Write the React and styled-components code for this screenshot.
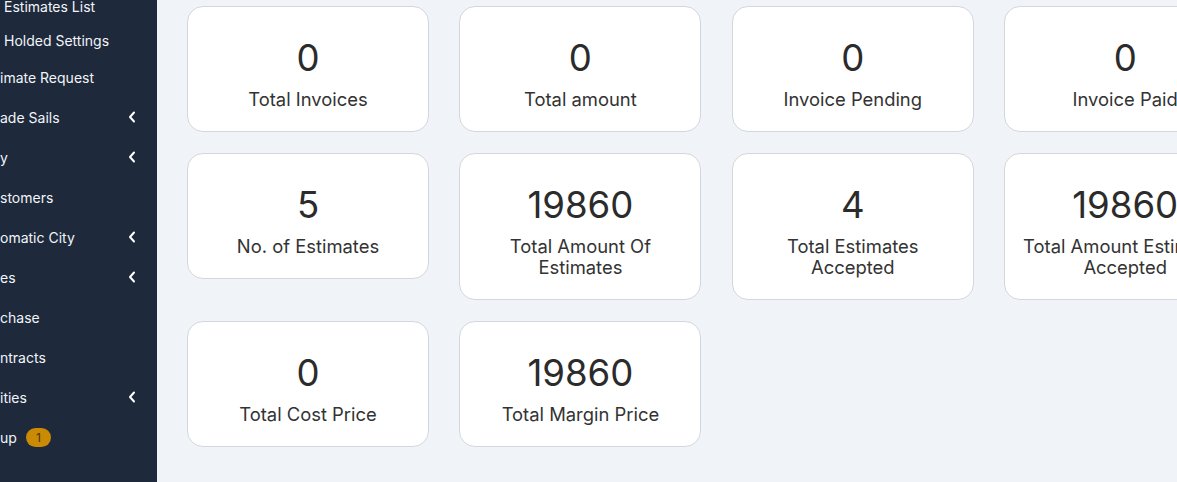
import React from 'react';
import styled, { createGlobalStyle } from 'styled-components';

const GlobalStyle = createGlobalStyle`
  html, body {
    margin: 0;
    padding: 0;
    height: 100%;
    overflow: hidden;
    background: #f0f3f8;
    font-family: Inter, "Noto Sans", sans-serif;
  }
  #root {
    height: 100%;
  }
`;

const Layout = styled.div`
  display: flex;
  height: 100vh;
  overflow: hidden;
`;

const Sidebar = styled.aside`
  flex: 0 0 157px;
  width: 157px;
  background: #1e293b;
  overflow: hidden;
`;

const NavList = styled.ul`
  list-style: none;
  margin: -11px 0 0;
  padding: 0;
`;

const NavItem = styled.li`
  display: flex;
  align-items: center;
  height: ${p => (p.$sub ? '34px' : '40px')};
  padding-left: ${p => (p.$sub ? '4px' : '0')};
  padding-right: 21px;
  color: #f1f5f9;
  font-size: 14px;
  white-space: nowrap;
`;

const Label = styled.span`
  flex: 1;
  display: flex;
  align-items: center;
  gap: 9px;
`;

const Badge = styled.span`
  display: inline-flex;
  align-items: center;
  justify-content: center;
  width: 25px;
  height: 19px;
  border-radius: 10px;
  background: #ca8a04;
  color: #4a3304;
  font-size: 12px;
`;

const Chevron = () => (
  <svg width="8" height="12" viewBox="0 0 8 12" fill="none">
    <polyline points="6,1.5 2,6 6,10.5" stroke="#ffffff" strokeWidth="2" strokeLinecap="round" strokeLinejoin="round" />
  </svg>
);

const Main = styled.main`
  flex: 1;
  padding: 6px 0 0 30px;
  overflow: hidden;
`;

const Grid = styled.div`
  display: grid;
  grid-template-columns: repeat(4, 242px);
  column-gap: 30.4px;
  row-gap: 21px;
  align-items: start;
`;

const Card = styled.div`
  background: #ffffff;
  border: 1px solid #d3d6db;
  border-radius: 16px;
  padding: 29px 16px 21px;
  display: flex;
  flex-direction: column;
  align-items: center;
  text-align: center;
  box-sizing: border-box;
`;

const Value = styled.div`
  font-size: 36.6px;
  line-height: 44px;
  color: #2b2b2b;
  margin-bottom: 9px;
`;

const Title = styled.div`
  font-size: 18.4px;
  line-height: 21px;
  color: #333333;
`;

const nav = [
  { label: 'Estimates List', sub: true },
  { label: 'Holded Settings', sub: true },
  { label: 'imate Request' },
  { label: 'ade Sails', chevron: true },
  { label: 'y', chevron: true },
  { label: 'stomers' },
  { label: 'omatic City', chevron: true },
  { label: 'es', chevron: true },
  { label: 'chase' },
  { label: 'ntracts' },
  { label: 'ities', chevron: true },
  { label: 'up', badge: 1 },
];

const stats = [
  { value: 0, title: 'Total Invoices' },
  { value: 0, title: 'Total amount' },
  { value: 0, title: 'Invoice Pending' },
  { value: 0, title: 'Invoice Paid' },
  { value: 5, title: 'No. of Estimates' },
  { value: 19860, title: 'Total Amount Of Estimates' },
  { value: 4, title: 'Total Estimates Accepted' },
  { value: 19860, title: 'Total Amount Estimates Accepted' },
  { value: 0, title: 'Total Cost Price' },
  { value: 19860, title: 'Total Margin Price' },
];

const App = () => (
  <>
    <GlobalStyle />
    <Layout>
      <Sidebar>
        <NavList>
          {nav.map((item, i) => (
            <NavItem key={i} $sub={item.sub}>
              <Label>
                {item.label}
                {item.badge && <Badge>{item.badge}</Badge>}
              </Label>
              {item.chevron && <Chevron />}
            </NavItem>
          ))}
        </NavList>
      </Sidebar>
      <Main>
        <Grid>
          {stats.map((s, i) => (
            <Card key={i}>
              <Value>{s.value}</Value>
              <Title>{s.title}</Title>
            </Card>
          ))}
        </Grid>
      </Main>
    </Layout>
  </>
);

export default App;
